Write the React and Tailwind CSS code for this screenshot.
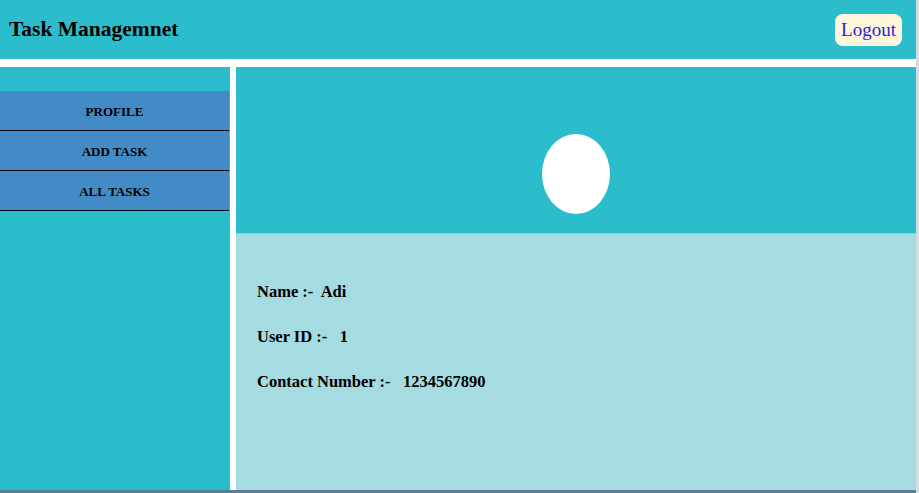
import React from "react";

const MENU = ["PROFILE", "ADD TASK", "ALL TASKS"];

const user = { name: "Adi", id: "1", contact: "1234567890" };

export default function App() {
  return (
    <div className="flex h-[493px] w-[919px] overflow-hidden bg-white font-['Liberation_Serif',serif] text-black">
      <div className="flex w-[916px] flex-col">
        <header className="flex h-[59px] items-center justify-between bg-[#2bbdcc] pl-[9px] pr-[14px]">
          <h1 className="text-[21.5px] font-bold leading-none">Task Managemnet</h1>
          <button className="flex h-[32px] w-[67px] items-center justify-center rounded-lg bg-[#fdf5dc] text-[19px] leading-none text-[#2c1fd4]">
            Logout
          </button>
        </header>

        <div className="mt-[8px] flex h-[423px]">
          <aside className="w-[230px] bg-[#2bbdcc] pt-[24px]">
            {MENU.map((item) => (
              <div
                key={item}
                className="flex h-[40px] w-[229px] items-center justify-center border-b border-black bg-[#438bc6] pt-[2px] text-[13px] font-bold"
              >
                {item}
              </div>
            ))}
          </aside>

          <main className="ml-[6px] flex flex-1 flex-col">
            <div className="flex h-[167px] justify-center border-b border-[#7fd3dc] bg-[#2bbdcc] pt-[67px]">
              <div className="h-[80px] w-[68px] rounded-[50%] bg-white" />
            </div>
            <div className="flex flex-1 flex-col gap-[27px] bg-[#a5dce2] pl-[21px] pt-[49px] text-[16.5px] font-bold leading-[18px]">
              <div className="whitespace-pre">Name :-  {user.name}</div>
              <div className="whitespace-pre">User ID :-   {user.id}</div>
              <div className="whitespace-pre">Contact Number :-   {user.contact}</div>
            </div>
          </main>
        </div>

        <div className="h-[3px] bg-[#5b7d93]" />
      </div>
      <div className="w-[3px] bg-[#d9dcdc]" />
    </div>
  );
}
